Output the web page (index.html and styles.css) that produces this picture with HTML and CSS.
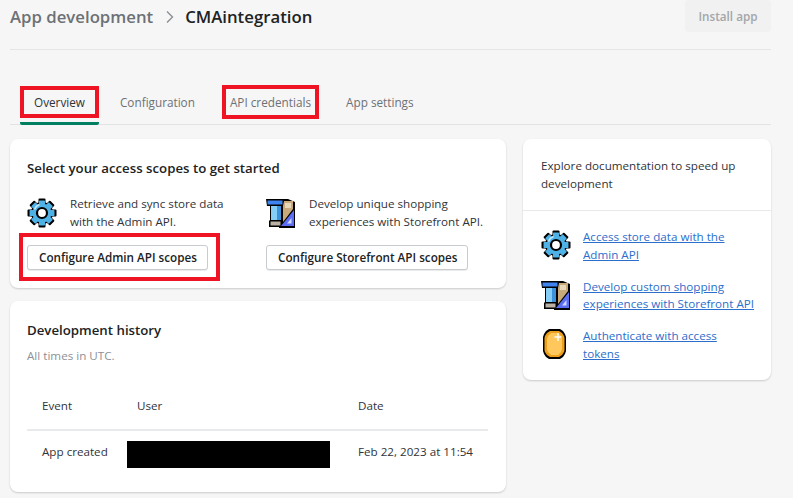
FILE: index.html
```html
<!DOCTYPE html>
<html lang="en">
<head>
<meta charset="utf-8">
<title>CMAintegration</title>
<link rel="stylesheet" href="styles.css">
</head>
<body>
<svg class="defs" width="0" height="0" aria-hidden="true">
  <defs>
    <g id="tooth-set">
      <rect x="11.500" y="0.500" width="7" height="29" rx="1"/>
      <rect x="11.500" y="0.500" width="7" height="29" rx="1" transform="rotate(45 15 15)"/>
      <rect x="11.500" y="0.500" width="7" height="29" rx="1" transform="rotate(90 15 15)"/>
      <rect x="11.500" y="0.500" width="7" height="29" rx="1" transform="rotate(135 15 15)"/>
    </g>
    <g id="gear">
      <g fill="#000"><use href="#tooth-set"/><circle cx="15" cy="15" r="11"/></g>
      <g fill="#4fb2e6" transform="translate(15 15) scale(.86) translate(-15 -15)"><use href="#tooth-set"/><circle cx="15" cy="15" r="11"/></g>
      <path d="M7.500 11.500a8.500 8.500 0 0 1 5-5" stroke="#c4e9fb" stroke-width="1.600" fill="none"/>
      <circle cx="15" cy="15" r="5" fill="#fff" stroke="#000" stroke-width="2.200"/>
    </g>
    <g id="blueprint">
      <path d="M0 1h22l7 3v26H13v-1H3v-6l1-1V8H1z" fill="#000"/>
      <path d="M1.500 2.500h15v4h-15z" fill="#3f83ee"/>
      <path d="M5 8h10v14H5z" fill="#86cdf5"/>
      <path d="M11 8h4v14h-4z" fill="#3c93dc"/>
      <path d="M4.500 23.500h10v4h-10z" fill="#b9b1a3"/>
      <path d="M18 3h9v8L17 24V8z" fill="#c8aa7a"/>
      <path d="M19 5h6v5h-6z" fill="#e8d8ba"/>
      <path d="M28 12v16H15z" fill="#5b6df2"/>
      <path d="M25.500 20v5.500h-4.500z" fill="#d3d6ff"/>
    </g>
    <g id="coin">
      <path d="M8 0h11l3 2 2 3 1 3v14l-1 3-2 3-3 2H8l-3-2-2-3-1-3V8l1-3 2-3z" fill="#000"/>
      <path d="M9 2h9l3 2 2 3 .5 2v12l-.5 2-2 3-3 2H9l-3-2-2-3-.5-2V9L4 7l2-3z" fill="#ee9f1c"/>
      <path d="M10 4h7l3 3 1 3v10l-1 3-3 3h-7l-3-3-1-3V10l1-3z" fill="#ffc75c"/>
      <path d="M17 4v8M13.500 8h7" stroke="#fff" stroke-width="1.400"/>
    </g>
  </defs>
</svg>
<div class="page">
  <header class="topbar">
    <h1 class="crumbs">
      <span class="crumb-parent">App development</span>
      <svg class="chevron" width="8" height="12" viewBox="0 0 8 12"><path d="M1 .5l5.500 5.500-5.500 5.500" fill="none" stroke="#8a9097" stroke-width="1.400"/></svg>
      <span class="crumb-current">CMAintegration</span>
    </h1>
    <button class="install">Install app</button>
  </header>

  <nav class="tabs">
    <span class="tab tab-active">Overview<i class="mark mark-overview"></i></span>
    <span class="tab">Configuration</span>
    <span class="tab">API credentials<i class="mark mark-api"></i></span>
    <span class="tab">App settings</span>
  </nav>

  <div class="layout">
    <main class="main">
      <section class="card scopes">
        <h2 class="card-title">Select your access scopes to get started</h2>
        <div class="scope-grid">
          <div class="scope scope-admin">
            <div class="scope-info">
              <svg class="icon" viewBox="0 0 30 30"><use href="#gear"/></svg>
              <p>Retrieve and sync store data<br>with the Admin API.</p>
            </div>
            <span class="btn-wrap">
              <button class="btn">Configure Admin API scopes</button>
              <i class="mark mark-admin"></i>
            </span>
          </div>
          <div class="scope">
            <div class="scope-info">
              <svg class="icon" viewBox="0 0 30 30"><use href="#blueprint"/></svg>
              <p>Develop unique shopping<br>experiences with Storefront API.</p>
            </div>
            <button class="btn">Configure Storefront API scopes</button>
          </div>
        </div>
      </section>

      <section class="card history">
        <h2 class="card-title">Development history</h2>
        <p class="subdued">All times in UTC.</p>
        <div class="table">
          <div class="row row-head">
            <span class="c-event">Event</span><span class="c-user">User</span><span class="c-date">Date</span>
          </div>
          <div class="row row-body">
            <span class="c-event">App created</span>
            <span class="c-user"><span class="redacted"></span></span>
            <span class="c-date">Feb 22, 2023 at 11:54</span>
          </div>
        </div>
      </section>
    </main>

    <aside class="card docs">
      <p class="docs-intro">Explore documentation to speed up development</p>
      <ul class="docs-list">
        <li><svg class="icon" viewBox="0 0 30 30"><use href="#gear"/></svg><a href="#">Access store data with the Admin API</a></li>
        <li><svg class="icon" viewBox="0 0 30 30"><use href="#blueprint"/></svg><a href="#">Develop custom shopping experiences with Storefront API</a></li>
        <li><svg class="icon" viewBox="0 0 30 30"><use href="#coin"/></svg><a href="#">Authenticate with access tokens</a></li>
      </ul>
    </aside>
  </div>
</div>
</body>
</html>
```
FILE: styles.css
```css
* { box-sizing: border-box; }
html, body { margin: 0; height: 100%; }
body {
  background: #f6f6f7;
  color: #303338;
  font-family: "Open Sans", "Liberation Sans", sans-serif;
  font-size: 11.650px;
  line-height: 18px;
  overflow: hidden;
}
.defs { position: absolute; }
p, h1, h2, ul { margin: 0; padding: 0; }
.page { padding: 0 22px 0 10px; }

.topbar {
  display: flex;
  justify-content: space-between;
  align-items: flex-start;
  height: 50px;
  border-bottom: 1px solid #e4e5e7;
}
.crumbs {
  display: flex;
  align-items: center;
  gap: 11px;
  height: 33px;
  font-size: 16.750px;
  font-weight: 600;
}
.chevron { margin-left: 2px; }
.crumb-parent { color: #6d7175; }
.crumb-current { color: #202223; }
.install {
  width: 86px;
  height: 32px;
  border: 0;
  border-radius: 4px;
  background: #f1f1f1;
  color: #a3a6aa;
  font: 600 11.700px "Open Sans", sans-serif;
}

.tabs {
  display: flex;
  gap: 7px;
  margin-top: 37px;
  padding-left: 10px;
  height: 38px;
  border-bottom: 1px solid #e1e3e5;
}
.tab {
  position: relative;
  padding: 6px 14px 0;
  height: 38px;
  color: #6d7175;
  font-size: 11.750px;
}
.tab-active { color: #303338; border-bottom: 3px solid #008060; border-radius: 2px; }

.mark { position: absolute; border: 4px solid #ee1423; pointer-events: none; }
.mark-overview { left: 0; top: -1px; width: 79px; height: 32px; }
.mark-api { left: 6px; top: -2px; width: 97px; height: 34px; }
.mark-admin { left: -8px; top: -12px; width: 201px; height: 48px; }

.layout {
  display: grid;
  grid-template-columns: 496px 248px;
  gap: 17px;
  align-items: start;
  margin-top: 14px;
}
.main { display: flex; flex-direction: column; gap: 13px; }
.card {
  background: #fff;
  border-radius: 8px;
  box-shadow: 0 1px 2px rgba(0, 0, 0, .18);
}
.card-title { font-size: 13.250px; font-weight: 600; line-height: 20px; color: #202223; }

.scopes { height: 149px; padding: 19px 17px 0; }
.scope-grid { display: grid; grid-template-columns: 239px 1fr; margin-top: 18px; }
.scope { display: flex; flex-direction: column; align-items: flex-start; gap: 10px; }
.scope-info { display: flex; gap: 13px; height: 39px; white-space: nowrap; }
.scope-info p { margin-top: -1px; }
.icon { flex: none; width: 30px; height: 30px; }
.scope-info .icon { margin-top: 2px; }
.btn-wrap { position: relative; display: block; }
.btn {
  display: block;
  height: 25px;
  padding: 0 10px 2px 11px;
  border: 1px solid #c9cccf;
  border-radius: 3px;
  background: #fff;
  color: #202223;
  font: 600 11.700px "Open Sans", sans-serif;
  box-shadow: 0 1px 0 rgba(0, 0, 0, .08);
}

.history { height: 191px; padding: 19px 18px 0 17px; }
.subdued { margin-top: 7px; color: #8c9196; }
.table { margin-top: 18px; }
.row { display: grid; grid-template-columns: 95px 221px 1fr; align-items: center; padding-left: 15px; }
.row-head { height: 48px; border-bottom: 2px solid #e9eaec; }
.row-body { height: 42px; }
.redacted { display: block; width: 203px; height: 27px; margin: 4px 0 0 -10px; background: #000; }

.docs { height: 241px; }
.docs-intro { padding: 18px 18px 17px; border-bottom: 1px solid #e8e9eb; }
.docs-list { list-style: none; padding: 17px 16px 0 18px; }
.docs-list li { display: flex; gap: 12px; height: 49.500px; }
.docs-list .icon { margin-top: 2px; }
.docs-list a { color: #2c6ecb; line-height: 17.500px; }
```
